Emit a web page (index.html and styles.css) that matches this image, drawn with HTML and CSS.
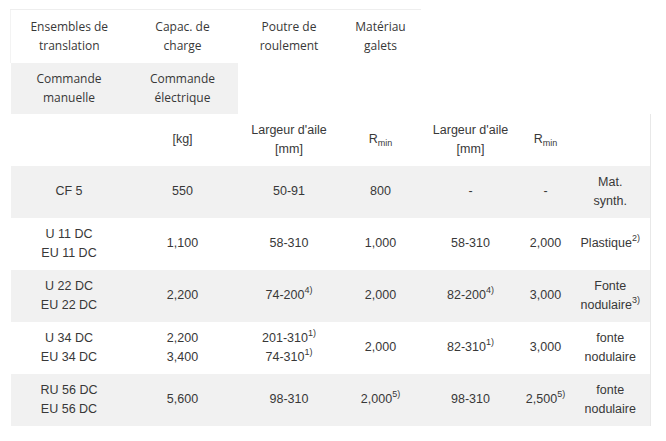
FILE: index.html
```html
<!DOCTYPE html>
<html lang="fr">
<head>
<meta charset="utf-8">
<title>Ensembles de translation</title>
<link rel="stylesheet" href="styles.css">
</head>
<body>
<table class="spec">
  <colgroup>
    <col class="c1"><col class="c2"><col class="c3"><col class="c4"><col class="c5"><col class="c6"><col class="c7">
  </colgroup>
  <tr class="head1">
    <td class="first">Ensembles de<br>translation</td>
    <td>Capac. de<br>charge</td>
    <td>Poutre de<br>roulement</td>
    <td>Matériau<br>galets</td>
  </tr>
  <tr class="head2">
    <td class="shade">Commande<br>manuelle</td>
    <td class="shade">Commande<br>électrique</td>
  </tr>
  <tr class="row">
    <td></td>
    <td>[kg]</td>
    <td>Largeur d'aile<br>[mm]</td>
    <td>R<sub>min</sub></td>
    <td>Largeur d'aile<br>[mm]</td>
    <td>R<sub>min</sub></td>
    <td class="last"></td>
  </tr>
  <tr class="row shade">
    <td>CF 5</td>
    <td>550</td>
    <td>50-91</td>
    <td>800</td>
    <td>-</td>
    <td>-</td>
    <td class="last">Mat.<br>synth.</td>
  </tr>
  <tr class="row">
    <td>U 11 DC<br>EU 11 DC</td>
    <td>1,100</td>
    <td>58-310</td>
    <td>1,000</td>
    <td>58-310</td>
    <td>2,000</td>
    <td class="last">Plastique<sup>2)</sup></td>
  </tr>
  <tr class="row shade">
    <td>U 22 DC<br>EU 22 DC</td>
    <td>2,200</td>
    <td>74-200<sup>4)</sup></td>
    <td>2,000</td>
    <td>82-200<sup>4)</sup></td>
    <td>3,000</td>
    <td class="last">Fonte<br>nodulaire<sup>3)</sup></td>
  </tr>
  <tr class="row">
    <td>U 34 DC<br>EU 34 DC</td>
    <td>2,200<br>3,400</td>
    <td>201-310<sup>1)</sup><br>74-310<sup>1)</sup></td>
    <td>2,000</td>
    <td>82-310<sup>1)</sup></td>
    <td>3,000</td>
    <td class="last">fonte<br>nodulaire</td>
  </tr>
  <tr class="row shade">
    <td>RU 56 DC<br>EU 56 DC</td>
    <td>5,600</td>
    <td>98-310</td>
    <td>2,000<sup>5)</sup></td>
    <td>98-310</td>
    <td>2,500<sup>5)</sup></td>
    <td class="last">fonte<br>nodulaire</td>
  </tr>
</table>
</body>
</html>
```

FILE: styles.css
```css
html, body {
  margin: 0;
  padding: 0;
  background: #ffffff;
}

body {
  padding: 9px 0 0 10px;
  font-family: "Liberation Sans", Arial, sans-serif;
  font-size: 12.5px;
  color: #383838;
}

.spec {
  border-collapse: collapse;
  table-layout: fixed;
  width: 640px;
}

.c1 { width: 117px; }
.c2 { width: 110px; }
.c3 { width: 103px; }
.c4 { width: 80px; }
.c5 { width: 100px; }
.c6 { width: 50px; }
.c7 { width: 80px; }

.spec td {
  text-align: center;
  vertical-align: middle;
  line-height: 19px;
  padding: 0 3px;
  height: 52px;
  box-sizing: border-box;
}

.head1 td {
  font-family: "Open Sans", "Liberation Sans", sans-serif;
  font-size: 12px;
  border-top: 1px solid #eeeeee;
  height: 53px;
}

.head1 .first {
  border-left: 1px solid #f3f3f3;
}

.head2 td {
  font-family: "Open Sans", "Liberation Sans", sans-serif;
  font-size: 12px;
  height: 51px;
}

.shade {
  background: #f1f1f1;
}

.row .last {
  border-right: 1px solid #e8e8e8;
}

sub {
  font-size: 9px;
  vertical-align: -3px;
  line-height: 0;
}

sup {
  font-size: 9px;
  vertical-align: 6px;
  line-height: 0;
}
```
